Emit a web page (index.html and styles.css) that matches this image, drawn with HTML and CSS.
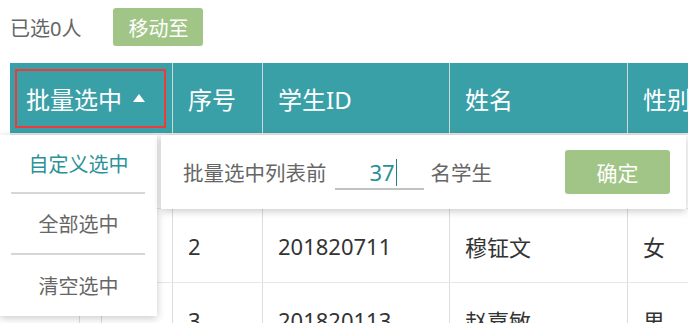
FILE: index.html
```html
<!DOCTYPE html>
<html lang="zh">
<head>
<meta charset="utf-8">
<title>批量选中</title>
<link rel="stylesheet" href="styles.css">
</head>
<body>
<div class="page">
  <div class="toolbar">
    <span class="selected">已选0人</span>
    <button class="btn btn-move">移动至</button>
  </div>

  <div class="table-wrap">
    <div class="table">
      <div class="row head">
        <div class="cell c1 head-select">
          <span>批量选中</span>
          <span class="tri"></span>
          <span class="focus-box"></span>
        </div>
        <div class="cell c2">序号</div>
        <div class="cell c3">学生ID</div>
        <div class="cell c4">姓名</div>
        <div class="cell c5">性别</div>
      </div>
      <div class="row">
        <div class="cell c1 split"><i></i><i></i><i></i></div>
        <div class="cell c2"></div>
        <div class="cell c3"></div>
        <div class="cell c4"></div>
        <div class="cell c5"></div>
      </div>
      <div class="row">
        <div class="cell c1 split"><i></i><i></i><i></i></div>
        <div class="cell c2">2</div>
        <div class="cell c3">201820711</div>
        <div class="cell c4">穆钲文</div>
        <div class="cell c5">女</div>
      </div>
      <div class="row">
        <div class="cell c1 split"><i></i><i></i><i></i></div>
        <div class="cell c2">3</div>
        <div class="cell c3">201820113</div>
        <div class="cell c4">赵嘉敏</div>
        <div class="cell c5">男</div>
      </div>
    </div>

    <div class="menu">
      <div class="menu-item active">自定义选中</div>
      <div class="menu-sep"></div>
      <div class="menu-item">全部选中</div>
      <div class="menu-sep"></div>
      <div class="menu-item">清空选中</div>
    </div>

    <div class="popover">
      <span class="pop-text">批量选中列表前</span>
      <span class="num-input"><span class="num">37</span><span class="caret"></span></span>
      <span class="pop-text">名学生</span>
      <button class="btn btn-ok">确定</button>
    </div>
  </div>
</div>
</body>
</html>
```

FILE: styles.css
```css
html, body {
  margin: 0;
  padding: 0;
  background: #fff;
  overflow: hidden;
}
body {
  font-family: "Noto Sans", "Noto Sans CJK SC", sans-serif;
  color: #333;
}
.page {
  width: 688px;
  height: 323px;
  overflow: hidden;
}
.toolbar {
  display: flex;
  align-items: center;
  gap: 32px;
  height: 38px;
  padding: 8px 0 0 10px;
}
.selected {
  font-size: 20px;
  color: #666;
}
.btn {
  border: none;
  border-radius: 3px;
  background: #a1c586;
  color: #fff;
  font-family: inherit;
  padding: 0;
  cursor: pointer;
}
.btn-move {
  width: 90px;
  height: 38px;
  font-size: 20px;
}
.table-wrap {
  position: relative;
  margin-top: 17px;
}
.table {
  margin-left: 10px;
  width: 800px;
}
.row {
  display: flex;
  height: 73px;
  border-bottom: 1px solid #e4e8eb;
}
.row.head {
  height: 70px;
  background: #3aa0a8;
  color: #fff;
  font-size: 24px;
  border-bottom: 2px solid #e6e6e6;
}
.cell {
  display: flex;
  align-items: center;
  padding-left: 15px;
  box-sizing: border-box;
  border-right: 1px solid #dcdcdc;
  font-size: 22px;
}
.row.head .cell {
  font-size: 24px;
  border-right-color: #cfd8d9;
}
.c1 { width: 163px; padding-left: 16px; }
.c2 { width: 90px; }
.c3 { width: 187px; }
.c4 { width: 178px; }
.c5 { width: 140px; }
.head-select {
  position: relative;
}
.tri {
  width: 0;
  height: 0;
  margin-left: 11px;
  border-left: 6px solid transparent;
  border-right: 6px solid transparent;
  border-bottom: 8px solid #fff;
}
.focus-box {
  position: absolute;
  left: 5px;
  top: 6px;
  right: 6px;
  bottom: 5px;
  border: 2px solid #f03a3a;
}
.cell.split {
  padding: 0;
  display: flex;
}
.cell.split i {
  display: block;
  height: 100%;
  border-right: 1px solid #dcdcdc;
  box-sizing: border-box;
}
.cell.split i:nth-child(1) { width: 70px; }
.cell.split i:nth-child(2) { width: 22px; }
.cell.split i:nth-child(3) { width: 70px; border-right: none; }

.menu {
  position: absolute;
  left: 0;
  top: 72px;
  width: 157px;
  height: 181px;
  background: #fff;
  box-shadow: 0 2px 8px rgba(0, 0, 0, 0.22);
  display: flex;
  flex-direction: column;
}
.menu-item {
  height: 59px;
  display: flex;
  align-items: center;
  justify-content: center;
  font-size: 20px;
  color: #666;
}
.menu-item.active {
  color: #2b9198;
  height: 57px;
}
.menu-item:last-child {
  height: 61px;
}
.menu-sep {
  height: 2px;
  margin: 0 12px 0 11px;
  background: #d6d6d6;
}
.popover {
  position: absolute;
  left: 161px;
  top: 72px;
  width: 525px;
  height: 74px;
  box-sizing: border-box;
  padding: 0 16px 0 22px;
  background: #fff;
  box-shadow: 0 2px 8px rgba(0, 0, 0, 0.22);
  display: flex;
  align-items: center;
}
.pop-text {
  font-size: 20.5px;
  color: #666;
}
.num-input {
  display: flex;
  align-items: center;
  justify-content: center;
  width: 89px;
  height: 32px;
  margin: 0 7px 0 8px;
  border-bottom: 2px solid #c2c2c2;
  position: relative;
  top: 1px;
}
.num {
  font-size: 22px;
  color: #2b9198;
  margin-left: 8px;
}
.caret {
  width: 1px;
  height: 27px;
  background: #1f7f86;
  margin-left: 1px;
}
.btn-ok {
  margin-left: auto;
  width: 105px;
  height: 44px;
  font-size: 21px;
}
```
